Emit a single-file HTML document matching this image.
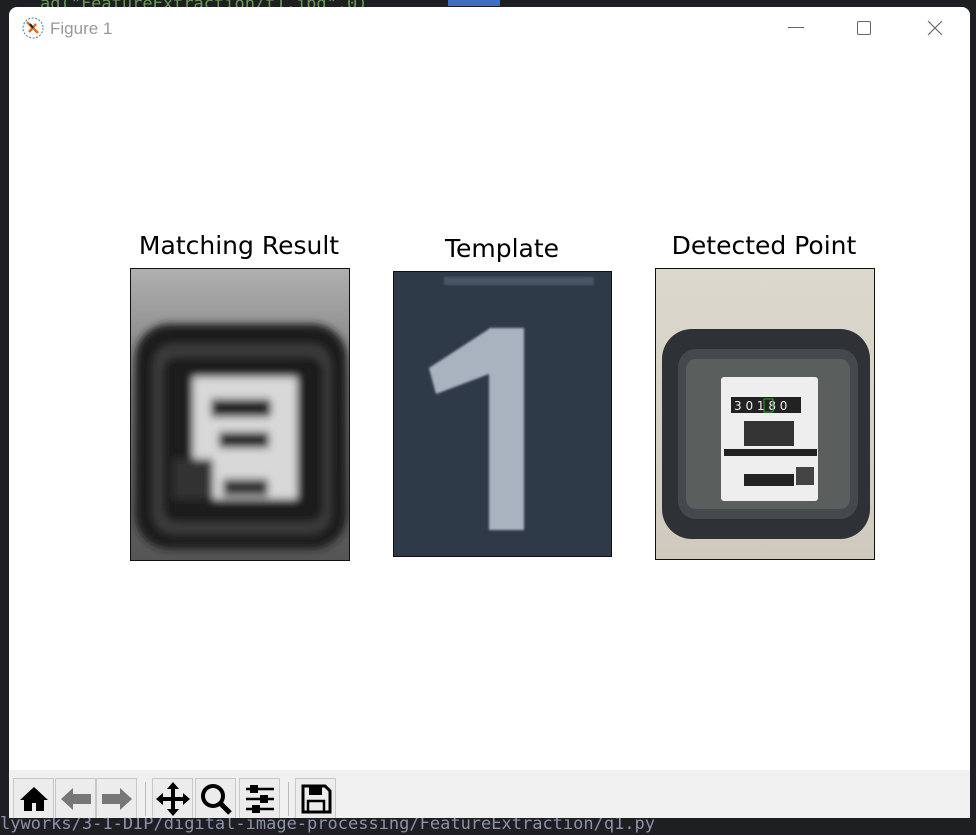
<!DOCTYPE html>
<html><head><meta charset="utf-8"><style>
*{margin:0;padding:0;box-sizing:border-box}
body{width:976px;height:835px;background:#1e1f22;position:relative;overflow:hidden;font-family:"DejaVu Sans","Liberation Sans",sans-serif}
.win{position:absolute;left:9px;top:7px;width:961px;height:811px;background:#fff;border-radius:8px 8px 0 0;overflow:hidden}
.title{position:absolute;left:41px;top:12px;font-family:"Liberation Sans",sans-serif;font-size:17px;color:#999}
.t{position:absolute;font-size:25px;color:#000;white-space:nowrap;transform:translateX(-50%)}
.p{position:absolute;border:1.5px solid #111;overflow:hidden}
.tb{position:absolute;left:0;top:763px;width:961px;height:48px;background:#f0f0f0}
.b{position:absolute;top:8px;width:41px;height:41px;border:1px solid #c8c8c8;background:#ececec;display:flex;align-items:center;justify-content:center}
.sep{position:absolute;top:12px;width:1px;height:34px;background:#bbb}
.code{position:absolute;font-family:"DejaVu Sans Mono",monospace;font-size:17px;color:#9aa4c0}
</style></head><body>
<div class="code" style="left:0;top:814px;color:#8c93a8">lyworks/3-1-DIP/digital-image-processing/FeatureExtraction/q1.py</div>
<div class="code" style="left:40px;top:-6px;color:#6a9955">ad("FeatureExtraction/t1.jpg",0)</div>
<div style="position:absolute;left:448px;top:0;width:52px;height:6px;background:#3d6fc0"></div>
<div class="win">
 <svg style="position:absolute;left:12px;top:9px" width="24" height="24" viewBox="0 0 24 24"><circle cx="12" cy="12" r="10" fill="#fff" stroke="#4a7ab0" stroke-dasharray="2 1.5"/><path d="M6 6L17 17M8 16L15 8" stroke="#e07020" stroke-width="2.5"/><path d="M9 8l3 4" stroke="#222" stroke-width="2"/></svg>
 <div class="title">Figure 1</div>
 <div style="position:absolute;left:779px;top:20px;width:16px;height:1px;background:#666"></div>
 <div style="position:absolute;left:848px;top:14px;width:14px;height:14px;border:1px solid #666;border-radius:2px"></div>
 <svg style="position:absolute;left:918px;top:13px" width="16" height="16"><path d="M1 1L15 15M15 1L1 15" stroke="#666" stroke-width="1.2"/></svg>

 <div class="t" style="left:230px;top:224px">Matching Result</div>
 <div class="t" style="left:493px;top:227px">Template</div>
 <div class="t" style="left:755px;top:224px">Detected Point</div>

 <div class="p" style="left:121px;top:261px;width:220px;height:293px;background:linear-gradient(#b0b0b0,#7a7a7a 40%,#555)">
  <svg width="220" height="293"><defs><filter id="f"><feGaussianBlur stdDeviation="4"/></filter></defs>
   <g filter="url(#f)"><rect x="4" y="55" width="212" height="225" rx="35" fill="#1a1a1a"/><rect x="22" y="75" width="178" height="190" rx="20" fill="#3a3a3a"/><rect x="32" y="88" width="160" height="165" rx="14" fill="#1c1c1c"/>
   <rect x="62" y="108" width="104" height="122" fill="#d8d8d8"/><rect x="80" y="130" width="60" height="18" fill="#222"/><rect x="88" y="163" width="50" height="16" fill="#222"/><rect x="92" y="210" width="45" height="17" fill="#333"/><rect x="42" y="190" width="40" height="40" fill="#333"/></g></svg>
 </div>

 <div class="p" style="left:384px;top:264px;width:219px;height:286px;background:#2f3a48">
  <svg width="219" height="286"><defs><filter id="g"><feGaussianBlur stdDeviation="1"/></filter></defs>
   <rect x="50" y="5" width="150" height="8" fill="#4a5565" filter="url(#g)"/>
   <g fill="#a9b2bf" filter="url(#g)"><rect x="95" y="56" width="35" height="202"/><polygon points="35,96 95,57 95,102 42,122"/></g></svg>
 </div>

 <div class="p" style="left:646px;top:261px;width:220px;height:292px;background:linear-gradient(#dcd8cd,#cfcabd)">
  <svg width="220" height="292"><rect x="6" y="60" width="208" height="210" rx="30" fill="#2e3236"/><rect x="22" y="80" width="180" height="170" rx="18" fill="#43494c"/><rect x="30" y="90" width="164" height="150" rx="10" fill="#5a5f5e"/>
   <rect x="65" y="108" width="97" height="124" rx="3" fill="#eeeeee"/><rect x="75" y="128" width="70" height="16" fill="#222"/>
   <text x="78" y="141" font-size="12" fill="#eee" font-family="DejaVu Sans">3 0 1 8 0</text><rect x="108" y="130" width="9" height="13" fill="none" stroke="#2a2"/>
   <rect x="88" y="152" width="50" height="25" fill="#333"/><rect x="68" y="180" width="93" height="7" fill="#222"/><rect x="88" y="205" width="50" height="12" fill="#222"/><rect x="140" y="198" width="18" height="18" fill="#444"/></svg>
 </div>

 <div class="tb">
  <div class="b" style="left:4px"><svg width="32" height="30" viewBox="0 0 32 30"><path d="M16 3L2 16h4v11h8v-8h4v8h8V16h4z" fill="#000"/></svg></div>
  <div class="b" style="left:46px"><svg width="34" height="26" viewBox="0 0 34 26"><path d="M2 13L14 2v6h18v10H14v6z" fill="#777"/></svg></div>
  <div class="b" style="left:87px"><svg width="34" height="26" viewBox="0 0 34 26"><path d="M32 13L20 2v6H2v10h18v6z" fill="#777"/></svg></div>
  <div class="sep" style="left:136px"></div>
  <div class="b" style="left:143px"><svg width="36" height="36" viewBox="0 0 36 36"><path d="M18 1l6 7h-4v8h8v-4l7 6-7 6v-4h-8v8h4l-6 7-6-7h4v-8H8v4l-7-6 7-6v4h8V8h-4z" fill="#000"/></svg></div>
  <div class="b" style="left:186px"><svg width="34" height="34" viewBox="0 0 34 34"><circle cx="14" cy="14" r="10" fill="none" stroke="#000" stroke-width="4"/><path d="M21 21l10 10" stroke="#000" stroke-width="5"/></svg></div>
  <div class="b" style="left:230px"><svg width="32" height="30" viewBox="0 0 32 30"><g stroke="#000" stroke-width="2.5"><path d="M2 5h28M2 15h28M2 25h28"/></g><rect x="6" y="1" width="8" height="8" fill="#000"/><rect x="16" y="11" width="8" height="8" fill="#000"/><rect x="8" y="21" width="8" height="8" fill="#000"/></svg></div>
  <div class="sep" style="left:279px"></div>
  <div class="b" style="left:286px"><svg width="32" height="32" viewBox="0 0 32 32"><path d="M3 3h22l5 5v21H3z" fill="none" stroke="#000" stroke-width="3"/><rect x="9" y="3" width="13" height="9" fill="#000"/><rect x="8" y="18" width="16" height="11" fill="none" stroke="#000" stroke-width="2.5"/></svg></div>
 </div>
</div>
</body></html>
